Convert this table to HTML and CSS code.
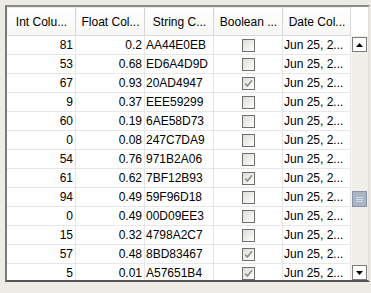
FILE: index.html
```html
<!DOCTYPE html>
<html>
<head>
<meta charset="utf-8">
<link rel="stylesheet" href="styles.css">
</head>
<body>
<div class="frame">
  <div class="main">
    <div class="header">
      <div class="hc">Int Colu...</div>
      <div class="hc">Float Col...</div>
      <div class="hc">String C...</div>
      <div class="hc">Boolean ...</div>
      <div class="hc">Date Col...</div>
    </div>
    <div class="rows">
      <div class="row"><div class="c num">81</div><div class="c num">0.2</div><div class="c str">AA44E0EB</div><div class="c chk"><span class="box"></span></div><div class="c str">Jun 25, 2...</div></div>
      <div class="row"><div class="c num">53</div><div class="c num">0.68</div><div class="c str">ED6A4D9D</div><div class="c chk"><span class="box"></span></div><div class="c str">Jun 25, 2...</div></div>
      <div class="row"><div class="c num">67</div><div class="c num">0.93</div><div class="c str">20AD4947</div><div class="c chk"><span class="box on"><svg viewBox="0 0 11 11" width="11" height="11"><path d="M2.2 5.6 L4.4 8 L9 2.2" fill="none" stroke="#8e8e8e" stroke-width="1.6"/></svg></span></div><div class="c str">Jun 25, 2...</div></div>
      <div class="row"><div class="c num">9</div><div class="c num">0.37</div><div class="c str">EEE59299</div><div class="c chk"><span class="box"></span></div><div class="c str">Jun 25, 2...</div></div>
      <div class="row"><div class="c num">60</div><div class="c num">0.19</div><div class="c str">6AE58D73</div><div class="c chk"><span class="box"></span></div><div class="c str">Jun 25, 2...</div></div>
      <div class="row"><div class="c num">0</div><div class="c num">0.08</div><div class="c str">247C7DA9</div><div class="c chk"><span class="box"></span></div><div class="c str">Jun 25, 2...</div></div>
      <div class="row"><div class="c num">54</div><div class="c num">0.76</div><div class="c str">971B2A06</div><div class="c chk"><span class="box"></span></div><div class="c str">Jun 25, 2...</div></div>
      <div class="row"><div class="c num">61</div><div class="c num">0.62</div><div class="c str">7BF12B93</div><div class="c chk"><span class="box on"><svg viewBox="0 0 11 11" width="11" height="11"><path d="M2.2 5.6 L4.4 8 L9 2.2" fill="none" stroke="#8e8e8e" stroke-width="1.6"/></svg></span></div><div class="c str">Jun 25, 2...</div></div>
      <div class="row"><div class="c num">94</div><div class="c num">0.49</div><div class="c str">59F96D18</div><div class="c chk"><span class="box"></span></div><div class="c str">Jun 25, 2...</div></div>
      <div class="row"><div class="c num">0</div><div class="c num">0.49</div><div class="c str">00D09EE3</div><div class="c chk"><span class="box"></span></div><div class="c str">Jun 25, 2...</div></div>
      <div class="row"><div class="c num">15</div><div class="c num">0.32</div><div class="c str">4798A2C7</div><div class="c chk"><span class="box"></span></div><div class="c str">Jun 25, 2...</div></div>
      <div class="row"><div class="c num">57</div><div class="c num">0.48</div><div class="c str">8BD83467</div><div class="c chk"><span class="box on"><svg viewBox="0 0 11 11" width="11" height="11"><path d="M2.2 5.6 L4.4 8 L9 2.2" fill="none" stroke="#8e8e8e" stroke-width="1.6"/></svg></span></div><div class="c str">Jun 25, 2...</div></div>
      <div class="row"><div class="c num">5</div><div class="c num">0.01</div><div class="c str">A57651B4</div><div class="c chk"><span class="box on"><svg viewBox="0 0 11 11" width="11" height="11"><path d="M2.2 5.6 L4.4 8 L9 2.2" fill="none" stroke="#8e8e8e" stroke-width="1.6"/></svg></span></div><div class="c str">Jun 25, 2...</div></div>
    </div>
  </div>
  <div class="side">
    <div class="corner"></div>
    <div class="sbar">
      <div class="btn"><svg viewBox="0 0 7 4" width="7" height="4"><path d="M0 4 L3.5 0 L7 4 Z" fill="#000"/></svg></div>
      <div class="track">
        <div class="thumb"><span></span><span></span><span></span></div>
      </div>
      <div class="btn"><svg viewBox="0 0 7 4" width="7" height="4"><path d="M0 0 L3.5 4 L7 0 Z" fill="#000"/></svg></div>
    </div>
  </div>
</div>
</body>
</html>
```

FILE: styles.css
```css
html, body {
  margin: 0;
  padding: 0;
}
body {
  background: #ecebe6;
  font-family: "Liberation Sans", Arial, sans-serif;
  font-size: 12px;
  color: #000;
}
.frame {
  margin: 5px 0 0 5px;
  width: 361px;
  height: 273px;
  border-top: 2px solid #8a8a87;
  border-left: 2px solid #7a7a78;
  border-bottom: 2px solid #555;
  border-right: 2px solid #e0dfda;
  background: #fff;
  display: flex;
  overflow: hidden;
}
.main {
  width: 344px;
  display: flex;
  flex-direction: column;
}
.header {
  display: grid;
  grid-template-columns: 69px 69px 69px 69px 68px;
  height: 29px;
  flex: none;
}
.hc {
  box-sizing: border-box;
  border-top: 1px solid #ececec;
  border-left: 1px solid #f6f6f6;
  border-right: 1px solid #d8d8d6;
  border-bottom: 1px solid #d8d8d6;
  background: linear-gradient(#ffffff, #f7f7f5);
  display: flex;
  align-items: center;
  justify-content: center;
  white-space: nowrap;
  overflow: hidden;
}
.rows {
  flex: 1;
  overflow: hidden;
}
.row {
  display: grid;
  grid-template-columns: 69px 69px 69px 69px 68px;
  height: 19px;
}
.c {
  box-sizing: border-box;
  border-right: 1px solid #e6e6e6;
  border-bottom: 1px solid #e6e6e6;
  display: flex;
  align-items: center;
  white-space: nowrap;
  overflow: hidden;
  line-height: 18px;
}
.num {
  justify-content: flex-end;
  padding-right: 2px;
}
.str {
  padding-left: 1px;
}
.chk {
  justify-content: center;
}
.box {
  box-sizing: border-box;
  width: 13px;
  height: 13px;
  border: 1px solid #6f6f6c;
  background: linear-gradient(135deg, #dcdcd7, #ffffff);
  display: flex;
  align-items: center;
  justify-content: center;
  margin-left: 1px;
}
.side {
  width: 17px;
  display: flex;
  flex-direction: column;
}
.corner {
  height: 29px;
  flex: none;
  background: #fff;
}
.sbar {
  flex: 1;
  display: flex;
  flex-direction: column;
  background: #efeee9;
  border-left: 1px solid #f7f7f4;
}
.btn {
  box-sizing: border-box;
  width: 15px;
  height: 15px;
  margin-top: 1px;
  border: 1px solid #7d7d7a;
  background: #fff;
  display: flex;
  align-items: center;
  justify-content: center;
  flex: none;
}
.track {
  flex: 1;
  position: relative;
}
.thumb {
  position: absolute;
  left: 0;
  top: 139px;
  box-sizing: border-box;
  width: 15px;
  height: 16px;
  border: 1px solid #8694aa;
  background: #a9b5c6;
  display: flex;
  flex-direction: column;
  align-items: center;
  justify-content: center;
  gap: 1px;
}
.thumb span {
  display: block;
  width: 7px;
  height: 1px;
  background: #d4dbe5;
}
```
